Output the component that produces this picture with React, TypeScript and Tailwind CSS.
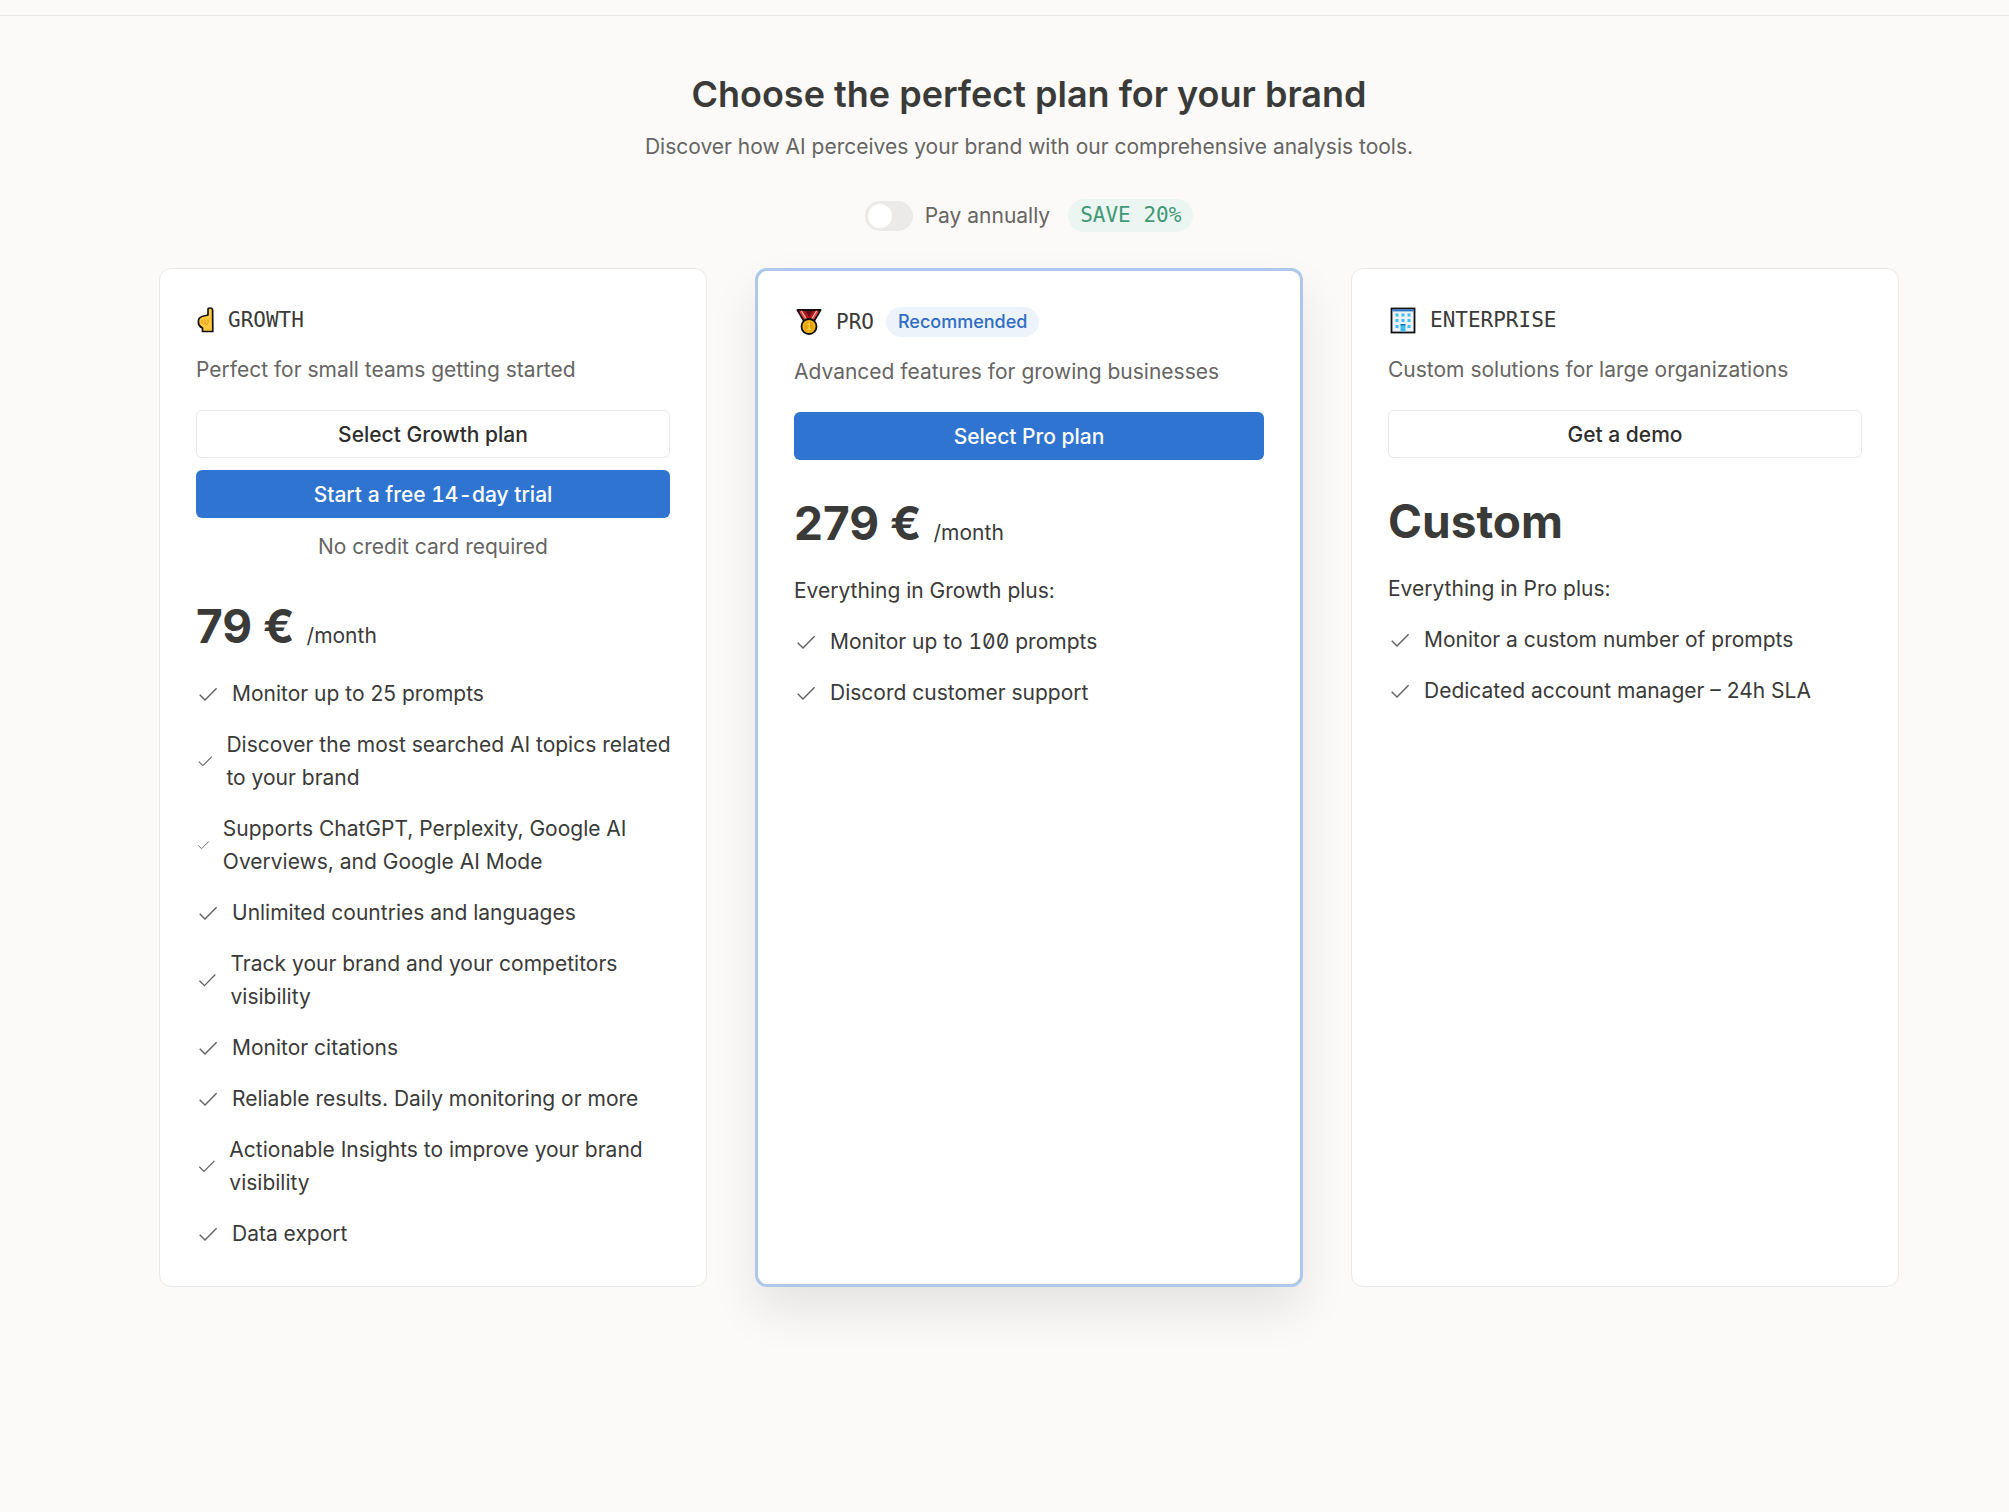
import React from "react";

const Check = () => (
  <svg viewBox="0 0 24 24" fill="none" stroke="#62615f" strokeWidth="1.4" className="block h-6 w-full" aria-hidden="true">
    <path d="M3.7 12.8 L9 18 L20.6 6.2" />
  </svg>
);

const Finger = () => (
  <svg viewBox="0 0 20 26" className="h-[26px] w-5" aria-hidden="true">
    <path d="M12 2.5 Q12 1 14 1 Q16.400 1 16.600 3 L16.800 24.500 H6.500 V21 Q3 19.500 2.500 16.500 Q2 12.500 3.500 11 Q5.500 9 10 8.500 L12 8 Z" fill="#ffc83d" stroke="#111" strokeWidth="1.700" strokeLinejoin="round" />
    <path d="M6 13 V17 M9 12.500 V17.500 M12 12.500 Q13 16 10.500 18" fill="none" stroke="#dc8d10" strokeWidth="0.900" />
  </svg>
);

const Medal = () => (
  <svg viewBox="0 0 30 28" className="h-7 w-[30px]" aria-hidden="true">
    <path d="M3.500 2 H26.500 L20 13 H10 Z" fill="#b3161c" stroke="#111" strokeWidth="2" strokeLinejoin="round" />
    <path d="M6.500 3 L12.500 12.500 M23.500 3 L17.500 12.500" stroke="#e8423f" strokeWidth="3" />
    <path d="M7.500 3 L13 12 M22.500 3 L17 12" stroke="#fbd5d0" strokeWidth="1" />
    <path d="M11.500 3 H18.500 L15 9 Z" fill="#5c0f14" />
    <circle cx="15" cy="18.500" r="7.500" fill="#f5b71b" stroke="#111" strokeWidth="1.800" />
    <circle cx="15" cy="18.500" r="4.800" fill="#e8a20d" />
    <path d="M13.500 16.500 L15.200 15.500 V21 M13.300 21.300 H17" fill="none" stroke="#ffd84a" strokeWidth="1.200" />
  </svg>
);

const Building = () => (
  <svg viewBox="0 0 30 28" className="h-7 w-[30px]" aria-hidden="true">
    <rect x="3.500" y="2.500" width="23" height="24" fill="#eef1f5" stroke="#111" strokeWidth="1.800" />
    <rect x="4.500" y="3.400" width="21" height="2" fill="#2877c9" />
    <g fill="#3cc0f0">
      <rect x="7.500" y="7.500" width="3" height="3" /><rect x="13.500" y="7.500" width="3" height="3" /><rect x="19.500" y="7.500" width="3" height="3" />
      <rect x="7.500" y="13" width="3" height="3" /><rect x="13.500" y="13" width="3" height="3" /><rect x="19.500" y="13" width="3" height="3" />
      <rect x="7.500" y="19" width="3" height="3" /><rect x="19.500" y="19" width="3" height="3" />
      <rect x="12.500" y="18.500" width="5" height="7" />
    </g>
    <rect x="12.500" y="18" width="5" height="1.500" fill="#1b6fb8" />
  </svg>
);

const mono = "font-['DejaVu_Sans_Mono',monospace]";

function Title({ icon, name, children }: { icon: React.ReactNode; name: string; children?: React.ReactNode }) {
  return (
    <div className="flex items-center gap-3">
      {icon}
      <h2 className={`${mono} leading-[30px]`}>{name}</h2>
      {children}
    </div>
  );
}

function Price({ amount, period }: { amount: string; period?: string }) {
  return (
    <p className="mt-9 flex items-baseline gap-3">
      <span className="text-[46px] font-bold leading-[54px]">{amount}</span>
      {period && <span>{period}</span>}
    </p>
  );
}

const btn = "flex h-12 w-full items-center justify-center rounded-md font-medium";
const outline = `${btn} border border-[#e9e8e6] bg-white text-[#2f2e2d]`;
const primary = `${btn} bg-[#2f74d0] text-white`;

function Features({ items, className = "" }: { items: React.ReactNode[]; className?: string }) {
  return (
    <ul className={`-mr-1 flex flex-col gap-[18px] ${className}`}>
      {items.map((it, i) => (
        <li key={i} className="flex items-center gap-3">
          <span className="min-w-0 shrink basis-6"><Check /></span>
          <span>{it}</span>
        </li>
      ))}
    </ul>
  );
}

const card = "rounded-xl border border-[#eae9e7] bg-white p-9";

export default function App() {
  return (
    <div className="min-h-screen bg-[#fbfaf8] font-[Inter,sans-serif] text-[21px] leading-[33px] text-[#3a3a39]">
      <div className="h-4 border-b border-[#e9e8e6]" />
      <main className="flex flex-col pb-[224px] pl-[159px] pr-[110px]">
        <header className="flex flex-col items-center pt-[54px] text-center">
          <h1 className="text-[36px] font-semibold leading-[48px]">Choose the perfect plan for your brand</h1>
          <p className="mt-3 text-[#666563]">Discover how AI perceives your brand with our comprehensive analysis tools.</p>
          <div className="mt-9 flex items-center">
            <label className="flex items-center gap-3 text-[#666563]">
              <input type="checkbox" role="switch" className="peer sr-only" />
              <span className="flex h-[30px] w-12 items-center rounded-full bg-[#ebeae8] px-[3px] peer-checked:justify-end">
                <span className="h-6 w-6 rounded-full bg-white" />
              </span>
              Pay annually
            </label>
            <span className={`${mono} ml-[18px] rounded-full bg-[#ebf6f2] px-3 text-[#429876]`}>SAVE 20%</span>
          </div>
        </header>
        <section className="mt-9 grid grid-cols-3 gap-12">
          <article className={card}>
            <Title icon={<Finger />} name="GROWTH" />
            <p className="mt-[18px] text-[#666563]">Perfect for small teams getting started</p>
            <div className="mt-6 flex flex-col gap-3">
              <button type="button" className={outline}>Select Growth plan</button>
              <button type="button" className={`${primary} tabular-nums`}>Start a free 14-day trial</button>
            </div>
            <p className="mt-3 text-center text-[#666563]">No credit card required</p>
            <Price amount="79 €" period="/month" />
            <Features className="mt-6" items={[
              "Monitor up to 25 prompts",
              "Discover the most searched AI topics related to your brand",
              "Supports ChatGPT, Perplexity, Google AI Overviews, and Google AI Mode",
              "Unlimited countries and languages",
              "Track your brand and your competitors visibility",
              "Monitor citations",
              "Reliable results. Daily monitoring or more",
              "Actionable Insights to improve your brand visibility",
              "Data export",
            ]} />
          </article>
          <article className="rounded-xl border-3 border-[#adc8ea] bg-white p-9 shadow-[0_24px_48px_rgba(0,0,0,0.09)]">
            <Title icon={<Medal />} name="PRO">
              <span className="rounded-full bg-[#ecf3fb] px-3 text-[18px] font-medium leading-[30px] text-[#2f6dc4]">Recommended</span>
            </Title>
            <p className="mt-[18px] text-[#666563]">Advanced features for growing businesses</p>
            <button type="button" className={`${primary} mt-6`}>Select Pro plan</button>
            <Price amount="279 €" period="/month" />
            <p className="mt-6">Everything in Growth plus:</p>
            <Features className="mt-[18px]" items={[
              <>Monitor up to <span className="slashed-zero tabular-nums">100</span> prompts</>,
              "Discord customer support",
            ]} />
          </article>
          <article className={card}>
            <Title icon={<Building />} name="ENTERPRISE" />
            <p className="mt-[18px] text-[#666563]">Custom solutions for large organizations</p>
            <button type="button" className={`${outline} mt-6`}>Get a demo</button>
            <Price amount="Custom" />
            <p className="mt-6">Everything in Pro plus:</p>
            <Features className="mt-[18px]" items={["Monitor a custom number of prompts", "Dedicated account manager – 24h SLA"]} />
          </article>
        </section>
      </main>
    </div>
  );
}
